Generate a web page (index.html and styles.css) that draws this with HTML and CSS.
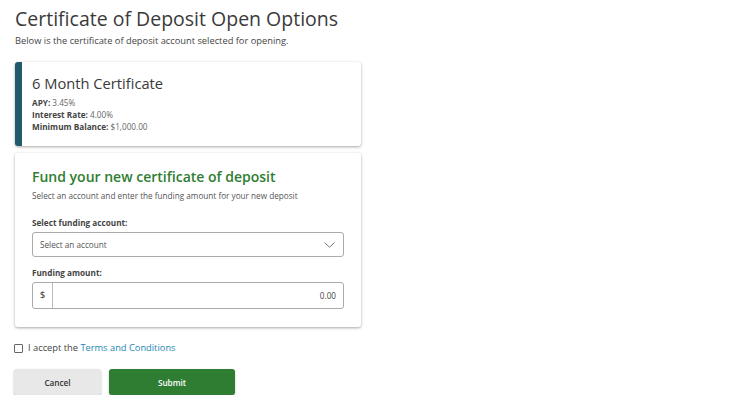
FILE: index.html
```html
<!DOCTYPE html>
<html lang="en">
<head>
<meta charset="utf-8">
<title>Certificate of Deposit Open Options</title>
<link rel="stylesheet" href="styles.css">
</head>
<body>
<main class="page">
  <h1 class="title">Certificate of Deposit Open Options</h1>
  <p class="intro">Below is the certificate of deposit account selected for opening.</p>

  <section class="card product">
    <h2 class="product-name">6 Month Certificate</h2>
    <div class="facts">
      <div><b>APY:</b> 3.45%</div>
      <div><b>Interest Rate:</b> 4.00%</div>
      <div><b>Minimum Balance:</b> $1,000.00</div>
    </div>
  </section>

  <section class="card fund">
    <h2 class="fund-title">Fund your new certificate of deposit</h2>
    <p class="fund-sub">Select an account and enter the funding amount for your new deposit</p>

    <label class="label">Select funding account:</label>
    <div class="select">
      <span>Select an account</span>
      <svg class="chev" width="11" height="6" viewBox="0 0 11 6"><path d="M0.5 0.6 L5.5 5.2 L10.5 0.6" fill="none" stroke="#666" stroke-width="0.9"/></svg>
    </div>

    <label class="label label-2">Funding amount:</label>
    <div class="amount">
      <span class="cur">$</span>
      <span class="val">0.00</span>
    </div>
  </section>

  <div class="accept">
    <span class="box"></span>
    <span>I accept the <a href="#" class="link">Terms and Conditions</a></span>
  </div>

  <div class="actions">
    <button class="btn cancel">Cancel</button>
    <button class="btn submit">Submit</button>
  </div>
</main>
</body>
</html>
```

FILE: styles.css
```css
* { box-sizing: border-box; }
html, body { margin: 0; padding: 0; background: #fff; }
body { font-family: "Open Sans", "Liberation Sans", sans-serif; color: #3c3c3c; }

.page { padding: 6px 0 0 15px; width: 361px; }

.title {
  margin: 0;
  font-size: 19.5px;
  font-weight: 400;
  color: #3a3a3a;
  line-height: 26px;
}
.intro {
  margin: 3px 0 0;
  font-size: 9.3px;
  line-height: 12px;
  color: #444;
}

.card {
  background: #fff;
  border-radius: 3px;
  box-shadow: 0 1px 3px rgba(0,0,0,0.35);
}

.product {
  margin-top: 15px;
  height: 84px;
  border-left: 7px solid #215a6b;
  padding: 11px 0 0 10px;
}
.product-name {
  margin: 0;
  font-size: 14.7px;
  font-weight: 400;
  color: #3a3a3a;
  line-height: 20px;
}
.facts {
  margin-top: 4px;
  font-size: 8.2px;
  line-height: 12px;
  color: #666;
}
.facts b { color: #444; font-weight: 700; }

.fund {
  margin-top: 7px;
  height: 174px;
  padding: 13px 17px 0 17px;
}
.fund-title {
  margin: 0;
  font-size: 14px;
  font-weight: 600;
  color: #2f7d32;
  line-height: 22px;
}
.fund-sub {
  margin: 2px 0 0;
  font-size: 8.2px;
  line-height: 12px;
  color: #555;
}
.label {
  display: block;
  margin-top: 15px;
  font-size: 8.2px;
  font-weight: 700;
  color: #444;
  line-height: 12px;
}
.label-2 { margin-top: 10px; }

.select {
  margin-top: 3px;
  height: 25px;
  border: 1px solid #aaa;
  border-radius: 3px;
  display: flex;
  align-items: center;
  justify-content: space-between;
  padding: 0 8px 0 7px;
  font-size: 8.2px;
  color: #555;
}

.amount {
  margin-top: 3px;
  height: 27px;
  border: 1px solid #aaa;
  border-radius: 3px;
  display: flex;
  align-items: center;
  font-size: 8.2px;
  color: #444;
}
.cur {
  width: 20px;
  height: 100%;
  border-right: 1px solid #bbb;
  display: flex;
  align-items: center;
  justify-content: center;
  font-size: 9px;
  font-weight: 600;
  color: #555;
  padding-bottom: 2px;
}
.val { flex: 1; text-align: right; padding-right: 7px; }

.accept {
  margin-top: 15px;
  margin-left: -1px;
  display: flex;
  align-items: center;
  gap: 5px;
  font-size: 9.3px;
  color: #444;
  line-height: 12px;
}
.box {
  width: 9px; height: 9px;
  border: 1px solid #666;
  border-radius: 1px;
}
.link { color: #1d87b5; text-decoration: none; }

.actions {
  margin-top: 15px;
  display: flex;
  gap: 8px;
  margin-left: -1px;
}
.btn {
  height: 26px;
  border: none;
  border-radius: 3px;
  font-family: "Open Sans", "Liberation Sans", sans-serif;
  font-size: 8.2px;
  font-weight: 600;
  box-shadow: 0 1px 2px rgba(0,0,0,0.3);
}
.cancel { width: 87px; background: #e8e8e8; color: #333; }
.submit { width: 126px; background: #2f7d32; color: #fff; }
```
